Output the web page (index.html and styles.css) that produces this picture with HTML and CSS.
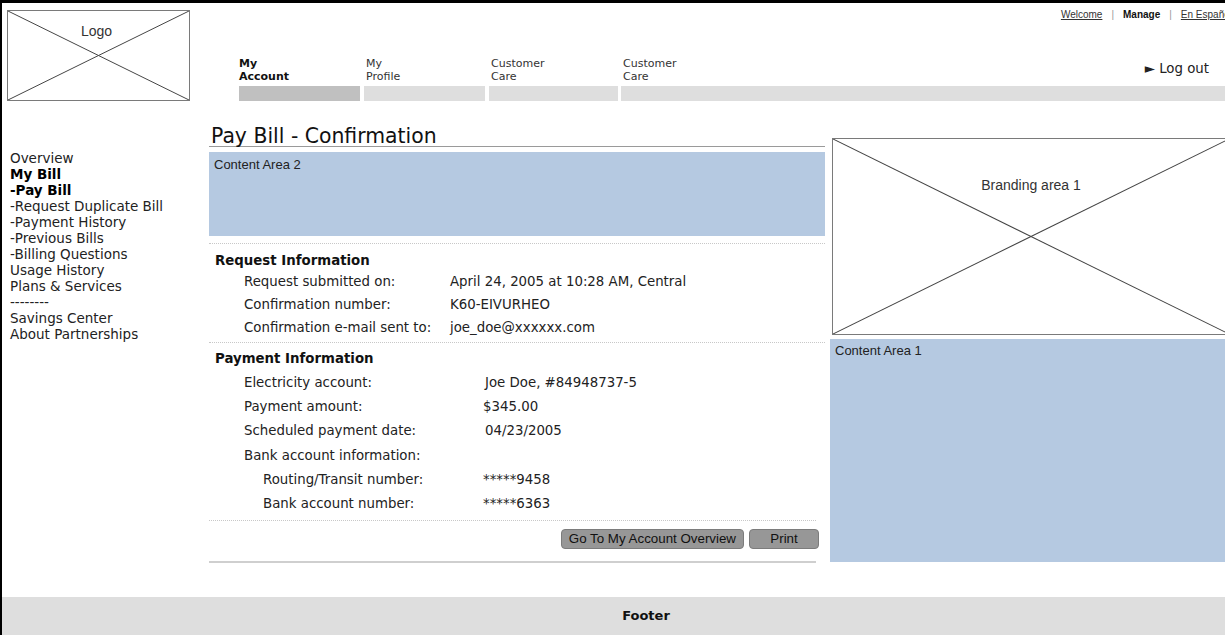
FILE: index.html
```html
<!DOCTYPE html>
<html lang="en">
<head>
<meta charset="utf-8">
<title>Pay Bill - Confirmation</title>
<link rel="stylesheet" href="styles.css">
</head>
<body>
<div class="page">
  <header class="header">
    <div class="placeholder logo">
      <svg class="cross" viewBox="0 0 100 100" preserveAspectRatio="none"><line x1="0" y1="0" x2="100" y2="100"/><line x1="100" y1="0" x2="0" y2="100"/></svg>
      <span class="placeholder-label logo-label">Logo</span>
    </div>
    <div class="header-nav">
      <div class="utility-links">
        <a href="#">Welcome</a><span class="sep">|</span><b>Manage</b><span class="sep">|</span><a href="#">En Español</a>
      </div>
      <nav class="tabs">
        <div class="tab tab-active"><span class="tab-label">My<br>Account</span><span class="tab-bar"></span></div>
        <div class="tab tab-w1"><span class="tab-label">My<br>Profile</span><span class="tab-bar"></span></div>
        <div class="tab tab-w2"><span class="tab-label">Customer<br>Care</span><span class="tab-bar"></span></div>
        <div class="tab tab-last">
          <div class="tab-top"><span class="tab-label">Customer<br>Care</span><a class="logout" href="#">► Log out</a></div>
          <span class="tab-bar"></span>
        </div>
      </nav>
    </div>
  </header>

  <main class="main">
    <ul class="side-nav">
      <li>Overview</li>
      <li class="strong">My Bill</li>
      <li class="strong">-Pay Bill</li>
      <li>-Request Duplicate Bill</li>
      <li>-Payment History</li>
      <li>-Previous Bills</li>
      <li>-Billing Questions</li>
      <li>Usage History</li>
      <li>Plans &amp; Services</li>
      <li>--------</li>
      <li>Savings Center</li>
      <li>About Partnerships</li>
    </ul>

    <section class="content">
      <h1 class="page-title">Pay Bill - Confirmation</h1>
      <div class="content-area content-area-2">Content Area 2</div>

      <div class="info-block info-request">
        <h2 class="info-heading">Request Information</h2>
        <dl class="info-list">
          <div class="info-row"><dt>Request submitted on:</dt><dd>April 24, 2005 at 10:28 AM, Central</dd></div>
          <div class="info-row"><dt>Confirmation number:</dt><dd>K60-EIVURHEO</dd></div>
          <div class="info-row"><dt>Confirmation e-mail sent to:</dt><dd>joe_doe@xxxxxx.com</dd></div>
        </dl>
      </div>

      <div class="info-block info-payment">
        <h2 class="info-heading">Payment Information</h2>
        <dl class="info-list">
          <div class="info-row"><dt>Electricity account:</dt><dd class="v-wide">Joe Doe, #84948737-5</dd></div>
          <div class="info-row"><dt>Payment amount:</dt><dd>$345.00</dd></div>
          <div class="info-row"><dt>Scheduled payment date:</dt><dd class="v-wide">04/23/2005</dd></div>
          <div class="info-row"><dt>Bank account information:</dt><dd></dd></div>
          <div class="info-row sub"><dt>Routing/Transit number:</dt><dd>*****9458</dd></div>
          <div class="info-row sub"><dt>Bank account number:</dt><dd>*****6363</dd></div>
        </dl>
      </div>

      <div class="actions">
        <button class="btn" type="button">Go To My Account Overview</button>
        <button class="btn btn-print" type="button">Print</button>
      </div>
      <div class="content-end"></div>
    </section>

    <aside class="sidebar">
      <div class="placeholder branding">
        <svg class="cross" viewBox="0 0 100 100" preserveAspectRatio="none"><line x1="0" y1="0" x2="100" y2="100"/><line x1="100" y1="0" x2="0" y2="100"/></svg>
        <span class="placeholder-label branding-label">Branding area 1</span>
      </div>
      <div class="content-area content-area-1">Content Area 1</div>
    </aside>
  </main>

  <footer class="footer">Footer</footer>
</div>
</body>
</html>
```

FILE: styles.css
```css
html, body {
  margin: 0;
  padding: 0;
  overflow: hidden;
  background: #fff;
}

.page {
  width: 1230px;
  height: 635px;
  box-sizing: border-box;
  border-top: 3px solid #000;
  border-left: 2px solid #000;
  display: flex;
  flex-direction: column;
  font-family: "DejaVu Sans", Verdana, sans-serif;
  font-size: 13.33px;
  color: #222;
}

/* ---------- header ---------- */
.header {
  display: flex;
  height: 98px;
  flex: none;
}

.placeholder {
  position: relative;
  box-sizing: border-box;
  border: 1px solid #7a7a7a;
  background: #fff;
}

.cross {
  position: absolute;
  inset: 0;
  width: 100%;
  height: 100%;
}

.cross line {
  stroke: #444;
  stroke-width: 1;
  vector-effect: non-scaling-stroke;
}

.placeholder-label {
  position: absolute;
  left: 0;
  right: 0;
  text-align: center;
  font-family: "Liberation Sans", Arial, sans-serif;
  font-size: 14px;
  color: #333;
}

.logo {
  width: 183px;
  height: 91px;
  margin: 7px 0 0 5px;
  flex: none;
}

.logo-label {
  top: 12px;
  left: -4px;
}

.header-nav {
  flex: 1;
  display: flex;
  flex-direction: column;
  margin-left: 49px;
}

.utility-links {
  align-self: flex-end;
  margin-top: 6px;
  margin-right: -2px;
  font-family: "Liberation Sans", Arial, sans-serif;
  font-size: 10px;
  line-height: 12px;
  color: #222;
  white-space: nowrap;
}

.utility-links a {
  color: #333;
  text-decoration: underline;
}

.utility-links b {
  color: #111;
}

.utility-links .sep {
  color: #999;
  margin: 0 9px;
}

.tabs {
  display: flex;
  margin-top: 36px;
}

.tab {
  display: flex;
  flex-direction: column;
  flex: none;
  width: 121px;
  margin-right: 4px;
}

.tab-w2 {
  width: 129px;
  margin-right: 3px;
}

.tab-last {
  flex: 1;
  margin-right: 0;
}

.tab-label {
  display: block;
  height: 26px;
  padding-left: 2px;
  font-size: 11px;
  line-height: 13px;
  color: #333;
}

.tab-active .tab-label {
  padding-left: 0;
  font-weight: bold;
  color: #111;
}

.tab-bar {
  display: block;
  height: 15px;
  margin-top: 3px;
  background: #dedede;
}

.tab-active .tab-bar {
  background: #c0c0c0;
}

.tab-top {
  display: flex;
  justify-content: space-between;
  align-items: flex-start;
}

.logout {
  margin: 4px 21px 0 0;
  font-size: 13.33px;
  line-height: 16px;
  color: #222;
  text-decoration: none;
}

/* ---------- main ---------- */
.main {
  flex: 1;
  display: grid;
  grid-template-columns: 207px 616px 1fr;
  align-items: start;
}

.side-nav {
  list-style: none;
  margin: 0;
  padding: 49px 0 0 8px;
  font-size: 13.5px;
  line-height: 16px;
  color: #222;
  white-space: nowrap;
}

.side-nav .strong {
  font-weight: bold;
  color: #000;
}

.content {
  display: flex;
  flex-direction: column;
}

.page-title {
  margin: 0;
  padding: 25px 0 0 2px;
  font-size: 20.4px;
  font-weight: normal;
  line-height: 20px;
  color: #111;
  border-bottom: 1px solid #9a9a9a;
}

.content-area {
  box-sizing: border-box;
  background: #b5c9e1;
  font-family: "Liberation Sans", Arial, sans-serif;
  font-size: 13px;
  color: #222;
  padding: 5px 5px;
}

.content-area-2 {
  height: 84px;
  margin-top: 5px;
}

.info-block {
  border-top: 1px dotted #c8c8c8;
}

.info-request {
  margin-top: 7px;
  padding-top: 8px;
}

.info-payment {
  margin-top: 3px;
  padding-top: 7px;
}

.info-heading {
  margin: 0;
  padding-left: 6px;
  font-size: 13.33px;
  line-height: 18px;
  font-weight: bold;
  color: #111;
}

.info-list {
  margin: 0;
  padding-left: 35px;
}

.info-row {
  display: flex;
  line-height: 23px;
}

.info-payment .info-list {
  margin-top: 3px;
}

.info-payment .info-row {
  line-height: 24.2px;
}

.info-row dt {
  width: 206px;
  flex: none;
}

.info-payment .info-row dt {
  width: 239px;
}

.info-payment .info-row.sub dt {
  width: 220px;
  padding-left: 19px;
}

.info-row dd {
  margin: 0;
}

.info-payment .info-row dd.v-wide {
  padding-left: 2px;
}

.actions {
  display: flex;
  justify-content: flex-end;
  gap: 5px;
  margin-top: 4px;
  margin-right: 9px;
  padding-top: 8px;
  border-top: 1px dotted #c8c8c8;
}

.btn {
  height: 20px;
  padding: 0 7px;
  box-sizing: border-box;
  border: 1px solid #7c7c7c;
  border-radius: 4px;
  background: #979797;
  font-family: "Liberation Sans", Arial, sans-serif;
  font-size: 13.33px;
  line-height: 18px;
  color: #111;
}

.btn-print {
  width: 70px;
  margin-right: -3px;
}

.content-end {
  height: 2px;
  margin: 12px 9px 0 0;
  background: #cfcfcf;
}

/* ---------- sidebar ---------- */
.sidebar {
  display: flex;
  flex-direction: column;
  margin-left: 5px;
}

.branding {
  height: 197px;
  margin: 37px 0 0 2px;
}

.branding-label {
  top: 38px;
}

.content-area-1 {
  height: 223px;
  margin-top: 4px;
  padding-top: 4px;
}

/* ---------- footer ---------- */
.footer {
  flex: none;
  height: 38px;
  box-sizing: border-box;
  padding-left: 60px;
  background: #dedede;
  text-align: center;
  font-size: 13px;
  font-weight: bold;
  line-height: 38px;
  color: #111;
}
```
